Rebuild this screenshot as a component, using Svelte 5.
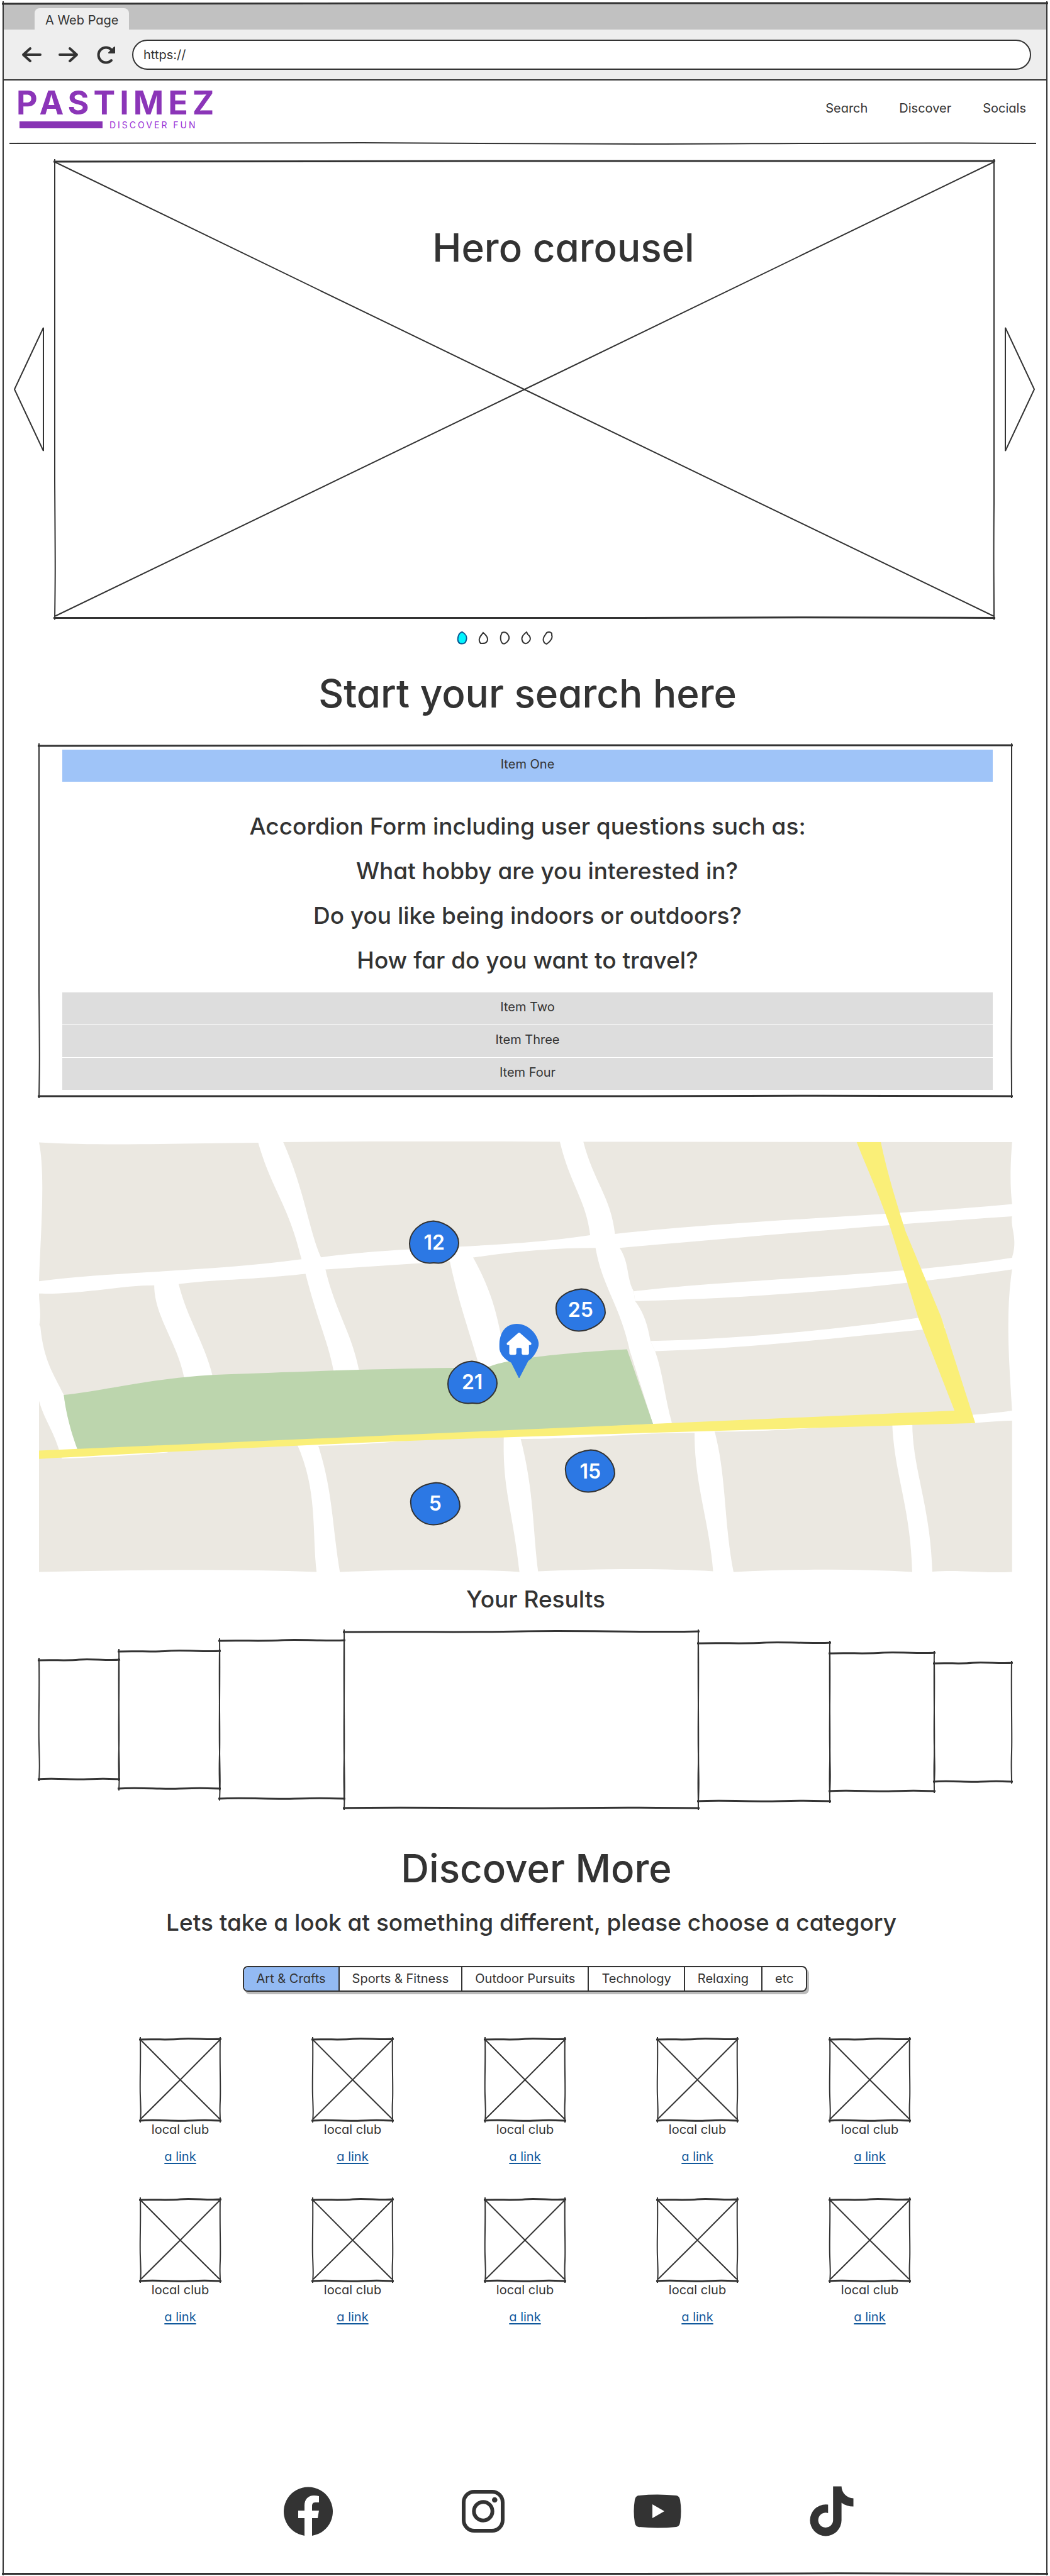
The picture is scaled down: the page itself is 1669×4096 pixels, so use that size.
<script>
  let address = $state('https://');
  let slide = $state(0);
  let category = $state(0);

  const navLinks = ['Search', 'Discover', 'Socials'];
  const slides = [
    'M9 1 C14 4 17 9 15 14 C14 20 9 20 5 19 C1 17 1 11 3 6 C5 2 7 1 9 1Z',
    'M8 2 C13 6 17 11 14 16 C12 20 7 19 4 19 C0 15 2 9 5 6Z',
    'M4 2 C8 0 12 2 14 6 C17 11 14 16 9 19 C3 22 1 13 2 7Z',
    'M9 1 L11 5 C16 8 16 14 12 17 C8 21 3 19 2 14 C0 9 5 4 9 1Z',
    'M7 2 C11 0 16 1 15 6 C17 10 13 16 7 20 C2 19 0 13 3 8Z'
  ];
  const questions = [
    { text: 'Accordion Form including user questions such as:' },
    { text: 'What hobby are you interested in?', indent: true },
    { text: 'Do you like being indoors or outdoors?' },
    { text: 'How far do you want to travel?' }
  ];
  const closedItems = ['Item Two', 'Item Three', 'Item Four'];
  const blobs = [
    'M40 2 C62 4 80 20 80 37 C80 55 60 69 48 69 Q40 68 34 69 C15 69 2 55 2 38 C2 20 18 3 40 2Z',
    'M42 2 C62 2 80 20 80 40 C78 59 52 69 38 69 C18 69 2 52 2 35 C0 20 14 5 42 2Z'
  ];
  const markers = [
    { n: 12, x: 40.5, y: 23.4, shape: 0 },
    { n: 25, x: 55.5, y: 39.1, shape: 1 },
    { n: 21, x: 44.4, y: 55.9, shape: 0 },
    { n: 15, x: 56.5, y: 76.5, shape: 1 },
    { n: 5, x: 40.6, y: 84, shape: 1 }
  ];
  const covers = [
    { w: 127, h: 190 },
    { w: 160, h: 219 },
    { w: 198, h: 252 },
    { w: 563, h: 281 },
    { w: 209, h: 252, after: true },
    { w: 166, h: 220, after: true },
    { w: 123, h: 189, after: true }
  ];
  const categories = ['Art & Crafts', 'Sports & Fitness', 'Outdoor Pursuits', 'Technology', 'Relaxing', 'etc'];
  const clubs = Array.from({ length: 10 }, (_, i) => i);
</script>

{#snippet frame(w, h, cross)}
  <svg class="frame" viewBox="0 0 {w} {h}" preserveAspectRatio="none" aria-hidden="true">
    <path class="heavy" d="M-2 1 C{w * 0.2} 0 {w * 0.35} 2 {w * 0.5} 0 S{w * 0.85} 2 {w + 2} 0" />
    <path class="heavy" d="M-2 {h} C{w * 0.2} {h - 2} {w * 0.4} {h + 1} {w * 0.6} {h} S{w * 0.8} {h - 1} {w + 2} {h}" />
    <path d="M0 -3 C1 {h * 0.3} -1 {h * 0.5} 0 {h * 0.7} S1 {h * 0.9} 0 {h + 3}" />
    <path d="M{w} -3 C{w - 1} {h * 0.3} {w + 1} {h * 0.6} {w} {h * 0.75} S{w} {h * 0.9} {w} {h + 3}" />
    {#if cross}
      <path d="M1 2 L{w * 0.5} {h * 0.5} L{w - 1} {h - 3}" />
      <path d="M{w - 1} 2 L{w * 0.5} {h * 0.5} L1 {h - 3}" />
    {/if}
  </svg>
{/snippet}

<div class="page">
  {@render frame(1659, 4089, false)}

  <div class="browser">
    <div class="tabstrip"><button class="tab">A Web Page</button></div>
    <div class="toolbar">
      <button class="tool" aria-label="Back">
        <svg viewBox="0 0 34 34"><path d="M31 17H4M15 7L4 17L15 27" /></svg>
      </button>
      <button class="tool" aria-label="Forward">
        <svg viewBox="0 0 34 34"><path d="M3 17H30M19 7L30 17L19 27" /></svg>
      </button>
      <button class="tool" aria-label="Reload">
        <svg viewBox="0 0 34 34">
          <path d="M26 9 A12 12 0 1 0 26 26" />
          <path class="solid" d="M31 5V14H22Z" />
        </svg>
      </button>
      <input class="address" type="text" aria-label="Address" bind:value={address} />
    </div>
  </div>

  <header>
    <a class="logo" href="#top">
      <span class="brand">PASTIMEZ</span>
      <span class="tagline"><span class="bar"></span>DISCOVER FUN</span>
    </a>
    <nav>
      {#each navLinks as label}<a href="#{label.toLowerCase()}">{label}</a>{/each}
    </nav>
    <svg class="rule" viewBox="0 0 1632 4" preserveAspectRatio="none" aria-hidden="true">
      <path d="M0 2 C300 3 400 1 560 1 S850 3 1000 3 S1400 0 1632 2" />
    </svg>
  </header>

  <main>
    <section class="hero">
      <button class="arrow" aria-label="Previous slide">
        <svg viewBox="0 0 48 198"><path d="M47 1 L1 99 L47 197 Z" /></svg>
      </button>
      <div class="stage">
        {@render frame(1494, 727, true)}
        <h1>Hero carousel</h1>
      </div>
      <button class="arrow" aria-label="Next slide">
        <svg viewBox="0 0 48 198"><path d="M1 1 L47 99 L1 197 Z" /></svg>
      </button>
    </section>
    <div class="dots">
      {#each slides as d, i}
        <button class:on={slide === i} aria-label="Slide {i + 1}" onclick={() => (slide = i)}>
          <svg viewBox="0 0 17 21"><path {d} /></svg>
        </button>
      {/each}
    </div>

    <h2 class="search-title">Start your search here</h2>
    <section class="accordion" id="search">
      {@render frame(1546, 558, false)}
      <button class="item open" aria-expanded="true">Item One</button>
      <div class="panel">
        {#each questions as q}<p class:indent={q.indent}>{q.text}</p>{/each}
      </div>
      <div class="closed">
        {#each closedItems as label}
          <button class="item" aria-expanded="false">{label}</button>
        {/each}
      </div>
    </section>

    <section class="map" aria-label="Map of clubs">
      <svg class="streets" viewBox="58 46 1457 1362" preserveAspectRatio="none" aria-hidden="true">
        <path
          class="land"
          d="M58 49 C150 60 250 53 384 50 L421 48 C560 45 700 45 835 47 L1511 48 C1508 130 1508 190 1511 243 L1511 281 C1508 320 1520 350 1511 412 L1511 450 C1500 600 1508 780 1511 896 L1511 1405 C1470 1410 1440 1398 1392 1404 L1362 1405 C1270 1393 1180 1397 1096 1405 L1065 1403 C980 1392 880 1396 804 1403 L776 1405 C690 1394 590 1397 508 1405 L473 1405 C340 1394 200 1399 58 1405 V630 C62 590 58 560 58 526 V488 C60 350 68 150 58 49Z"
        />
        <g class="road">
          <path d="M384 40 C405 200 430 240 450 418 L456 464 C475 620 490 680 498 772 L536 770 C525 650 500 580 486 452 L479 412 C460 320 455 200 421 40Z" />
          <path d="M835 40 C850 180 875 230 881 342 L889 382 C900 510 925 560 940 705 L975 940 L1003 935 C992 850 990 780 978 708 L971 676 C965 600 955 570 948 550 L946 519 C935 480 940 430 925 382 L918 338 C912 220 885 170 870 40Z" />
          <path d="M55 488 C170 455 300 460 450 418 L479 412 C600 375 750 385 881 342 L918 338 C1100 295 1300 285 1520 242 L1520 281 C1300 312 1100 350 925 382 L889 382 Q800 382 705 413 L671 424 L486 450 L456 464 C360 485 330 480 266 496 L230 500 C180 500 120 530 55 526Z" />
          <path d="M230 498 C230 600 265 680 275 795 L317 785 C305 680 280 610 266 492Z" />
          <path d="M671 420 C685 560 700 640 717 768 L765 745 L748 660 C742 600 735 520 705 408Z" />
          <path d="M946 519 C1100 480 1350 470 1520 410 L1520 447 C1350 500 1150 540 948 550Z" />
          <path d="M971 676 C1100 670 1250 640 1370 603 L1404 598 L1411 636 L1377 640 C1250 665 1120 700 978 708Z" />
          <path d="M50 600 L60 630 C65 740 80 780 95 846 C100 920 108 970 118 1028 L89 1028 C80 960 65 920 58 865 L50 865Z" />
          <path d="M443 1000 C475 1150 465 1280 473 1415 L508 1415 C495 1250 497 1150 474 1000Z" />
          <path d="M752 975 C750 1150 765 1200 776 1415 L804 1415 C795 1280 798 1150 776 975Z" />
          <path d="M1037 955 C1035 1120 1060 1250 1065 1415 L1096 1415 C1080 1250 1085 1100 1066 955Z" />
          <path d="M1332 935 C1335 1100 1360 1200 1362 1415 L1392 1415 C1390 1200 1362 1080 1362 935Z" />
          <path d="M1450 909 Q1490 903 1520 893 L1520 927 Q1490 928 1450 936Z" />
          <path d="M92 1047 Q180 1040 250 1028 L250 1010 L92 1030Z" />
          <path d="M474 1007 Q540 1004 605 991 L605 980 L474 990Z" />
          <path d="M776 985 C880 985 950 965 1037 966 L1066 962 C1130 962 1180 955 1260 945 V930 L776 960Z" />
        </g>
        <path class="park" d="M95 846 C150 835 220 795 317 783 C450 772 560 764 680 761 L730 757 C760 730 850 712 936 702 L975 938 L116 1022 C105 960 98 900 95 846Z" />
        <path class="highway" d="M58 1022 L1425 896 L1371 603 C1350 460 1340 390 1328 310 C1310 200 1290 110 1279 48 L1315 48 C1325 150 1340 250 1352 330 L1405 600 L1456 935 L780 978 C500 998 300 1020 58 1048Z" />
      </svg>
      {#each markers as m}
        <button class="marker" style="left: {m.x}%; top: {m.y}%" aria-label="{m.n} clubs">
          <svg viewBox="0 0 82 71" aria-hidden="true"><path d={blobs[m.shape]} /></svg>
          <span>{m.n}</span>
        </button>
      {/each}
      <svg class="pin" viewBox="617 695 229 313" aria-hidden="true">
        <path class="drop" d="M718 695 C790 695 842 760 846 811 C842 850 815 890 785 910 L734 1008 H730 L686 920 C645 900 617 865 617 828 C617 740 655 697 718 695Z" />
        <path class="house" d="M727 748 Q732 743 737 748 L802 805 Q806 817 794 818 H789 V864 Q789 874 779 874 H757 Q747 874 747 864 V842 Q747 834 739 834 H724 Q716 834 716 842 V864 Q716 874 706 874 H685 Q675 874 675 864 V818 H668 Q658 816 661 806Z" />
      </svg>
    </section>

    <h3 class="results-title">Your Results</h3>
    <section class="covers">
      {#each covers as c}
        <div class="cover" class:after={c.after} style="flex-grow: {c.w}; height: {c.h}px">
          {@render frame(c.w, c.h, false)}
        </div>
      {/each}
    </section>

    <h2 class="discover-title" id="discover">Discover More</h2>
    <p class="lead">Lets take a look at something different, please choose a category</p>
    <div class="categories">
      {#each categories as label, i}
        <button class:on={category === i} aria-pressed={category === i} onclick={() => (category = i)}>{label}</button>
      {/each}
    </div>

    <ul class="clubs">
      {#each clubs as club (club)}
        <li>
          <div class="thumb">{@render frame(127, 130, true)}</div>
          <p>local club</p>
          <a href="#club-{club + 1}">a link</a>
        </li>
      {/each}
    </ul>
  </main>

  <footer id="socials">
    <a href="#facebook" aria-label="Facebook">
      <svg viewBox="0 0 80 80">
        <path d="M33 79 V51 H23 V39 H33 V31 C33 21 39 15 48 15 Q52 15 56 16 V26 H50 C46 26 45 29 45 32 V39 H56 L54 51 H45 V79 A39 39 0 1 0 33 79Z" />
      </svg>
    </a>
    <a href="#instagram" aria-label="Instagram">
      <svg viewBox="0 0 80 80">
        <rect class="line" x="9" y="9" width="62" height="62" rx="17" />
        <circle class="line" cx="40" cy="40" r="14.7" />
        <circle cx="58.3" cy="22" r="4.3" />
      </svg>
    </a>
    <a href="#youtube" aria-label="YouTube">
      <svg viewBox="0 0 80 80">
        <path fill-rule="evenodd" d="M10 15 Q40 12 70 15 Q75 16 76 22 Q79 40 76 58 Q75 64 70 65 Q40 68 10 65 Q5 64 4 58 Q1 40 4 22 Q5 16 10 15Z M32 29 V51 L51 40Z" />
      </svg>
    </a>
    <a href="#tiktok" aria-label="TikTok">
      <svg viewBox="22 58 292 292">
        <path d="M176 60 H225 A70 70 0 0 0 294 129 V177 C268 177 245 170 225 155 V257 A91.5 91.5 0 1 1 134 165 L147 166 V215 A43 43 0 1 0 176 257Z" />
      </svg>
    </a>
  </footer>
</div>

<style>
  :global(body) {
    margin: 0;
    background: #fff;
  }
  .page {
    position: relative;
    margin: 5px 5px 2px;
    font-family: Inter, 'Open Sans', sans-serif;
    font-size: 20px;
    line-height: 24px;
    font-feature-settings: 'cv11';
    color: #333;
  }
  h1, h2, h3, p, ul {
    margin: 0;
    padding: 0;
    font-weight: 400;
  }
  button, input {
    padding: 0;
    border: 0;
    background: none;
    font: inherit;
    font-feature-settings: inherit;
    color: inherit;
  }
  a {
    color: inherit;
    text-decoration: none;
  }
  svg {
    display: block;
  }
  .frame {
    position: absolute;
    inset: 0;
    z-index: 1;
    width: 100%;
    height: 100%;
    overflow: visible;
    pointer-events: none;
  }
  .frame path, .rule path {
    fill: none;
    stroke: #333;
    stroke-width: 2px;
    vector-effect: non-scaling-stroke;
  }
  .frame .heavy {
    stroke-width: 3px;
  }

  .browser {
    background: #eee;
    border-bottom: 2px solid #333;
  }
  .tabstrip {
    display: flex;
    align-items: flex-end;
    height: 42px;
    padding-left: 50px;
    background: #c1c1c1;
  }
  .tab {
    height: 34px;
    padding: 4px 17px 0;
    border-radius: 8px 8px 0 0;
    background: #eee;
  }
  .toolbar {
    display: flex;
    align-items: center;
    gap: 25px;
    padding: 16px 25px 15px 28px;
  }
  .tool svg {
    width: 34px;
    height: 34px;
    fill: none;
    stroke: #333;
    stroke-width: 4px;
    stroke-linecap: round;
    stroke-linejoin: round;
  }
  .tool .solid {
    fill: #333;
    stroke-width: 2px;
  }
  .address {
    flex: 1;
    box-sizing: border-box;
    height: 48px;
    padding: 0 16px;
    border: 2px solid #333;
    border-radius: 24px;
    background: #fff;
  }

  header {
    position: relative;
    display: flex;
    justify-content: space-between;
    align-items: flex-start;
    box-sizing: border-box;
    height: 100px;
    margin: 0 17px 0 10px;
    padding: 10px 16px 0 11px;
  }
  .rule {
    position: absolute;
    left: 0;
    bottom: -2px;
    width: 100%;
    height: 4px;
    overflow: visible;
  }
  .logo {
    color: #8b35b8;
  }
  .brand {
    display: block;
    font-size: 52px;
    line-height: 51px;
    font-weight: 700;
    letter-spacing: 7px;
  }
  .tagline {
    display: flex;
    gap: 11px;
    margin: 4px 0 0 5px;
    font-size: 14px;
    line-height: 11px;
    letter-spacing: 3px;
    color: #9a2fd6;
  }
  .bar {
    width: 132px;
    height: 11px;
    background: #8833b4;
  }
  nav {
    display: flex;
    gap: 50px;
    padding-top: 22px;
  }

  .hero {
    display: flex;
    align-items: center;
    gap: 17px;
    margin-top: 28px;
    padding: 0 19px 0 17px;
  }
  .arrow svg {
    width: 48px;
    height: 198px;
    fill: #fff;
    stroke: #333;
    stroke-width: 2px;
  }
  .stage {
    position: relative;
    flex: 1;
    box-sizing: border-box;
    aspect-ratio: 1494 / 727;
    padding: 106px 0 0 124px;
  }
  h1, h2 {
    font-size: 62px;
    line-height: 64px;
    font-weight: 500;
    text-align: center;
  }
  .dots {
    display: flex;
    justify-content: center;
    gap: 17px;
    margin-top: 21px;
    padding-right: 64px;
  }
  .dots svg {
    width: 17px;
    height: 21px;
    fill: #fff;
    stroke: #333;
    stroke-width: 2px;
  }
  .dots .on svg {
    fill: #00f6ff;
    stroke: #0b5a94;
  }

  .search-title {
    margin-top: 46px;
    padding-left: 8px;
  }
  .accordion {
    position: relative;
    margin: 50px 56px 0 57px;
    padding: 7px 30px 10px 37px;
  }
  .item {
    display: block;
    width: 100%;
    height: 51px;
    padding-bottom: 4px;
    background: #ddd;
  }
  .item.open {
    background: #9fc4f8;
  }
  .closed {
    display: grid;
    gap: 1px;
  }
  .panel {
    padding: 35px 0 16px;
    font-size: 37px;
    line-height: 71px;
    text-align: center;
  }
  .panel p, .results-title, .lead {
    font-weight: 500;
  }
  .panel .indent {
    padding-left: 62px;
  }

  .map {
    position: relative;
    aspect-ratio: 1551 / 686;
    margin: 72px 51px 0 57px;
    overflow: hidden;
  }
  .streets {
    width: 100%;
    height: 100%;
  }
  .land {
    fill: #ebe8e1;
  }
  .road {
    fill: #fff;
  }
  .park {
    fill: #bcd5ad;
  }
  .highway {
    fill: #faef78;
  }
  .marker {
    position: absolute;
    display: grid;
    place-items: center;
    width: 82px;
    height: 71px;
    transform: translate(-50%, -50%);
    font-size: 32px;
    font-weight: 600;
    color: #fff;
  }
  .marker svg, .marker span {
    grid-area: 1 / 1;
  }
  .marker svg {
    width: 82px;
    height: 71px;
    fill: #2c78e4;
    stroke: #333;
    stroke-width: 2px;
  }
  .pin {
    position: absolute;
    left: 49.2%;
    top: 42.3%;
    width: 63px;
    height: 86px;
    transform: translateX(-50%);
  }
  .drop {
    fill: #2c78e4;
  }
  .house {
    fill: #fff;
  }

  .results-title, .lead {
    font-size: 37px;
    line-height: 48px;
    text-align: center;
  }
  .results-title {
    margin-top: 18px;
    padding-left: 34px;
  }
  .covers {
    display: flex;
    align-items: center;
    margin: 27px 56px 0 57px;
  }
  .cover {
    position: relative;
    flex-basis: 0;
  }
  .cover.after {
    margin-top: 8px;
  }
  .discover-title {
    margin-top: 64px;
    padding-left: 36px;
  }
  .lead {
    margin-top: 30px;
    padding-left: 20px;
  }
  .categories {
    display: flex;
    width: max-content;
    margin: 45px auto 0;
    border: 2px solid #333;
    border-radius: 8px;
    box-shadow: 3px 4px 0 #bbb;
    background: #fff;
    overflow: hidden;
  }
  .categories button {
    height: 37px;
    padding: 0 20px;
    border-left: 2px solid #333;
  }
  .categories button:first-child {
    border-left: 0;
  }
  .categories .on {
    background: #93baf3;
  }

  .clubs {
    display: grid;
    grid-template-columns: repeat(5, 127px);
    justify-content: center;
    gap: 56px 147px;
    margin-top: 75px;
    list-style: none;
    text-align: center;
  }
  .thumb {
    position: relative;
    height: 130px;
  }
  .clubs p {
    margin: 2px 0 19px;
  }
  .clubs a {
    display: block;
    color: #11599c;
    text-decoration: underline 2px;
    text-underline-offset: 3px;
    text-decoration-skip-ink: none;
  }

  footer {
    display: flex;
    justify-content: center;
    gap: 197px;
    margin-top: 257px;
    padding: 0 0 60px 143px;
  }
  footer svg {
    width: 80px;
    height: 80px;
    fill: #333;
  }
  footer .line {
    fill: none;
    stroke: #333;
    stroke-width: 6px;
  }
</style>
